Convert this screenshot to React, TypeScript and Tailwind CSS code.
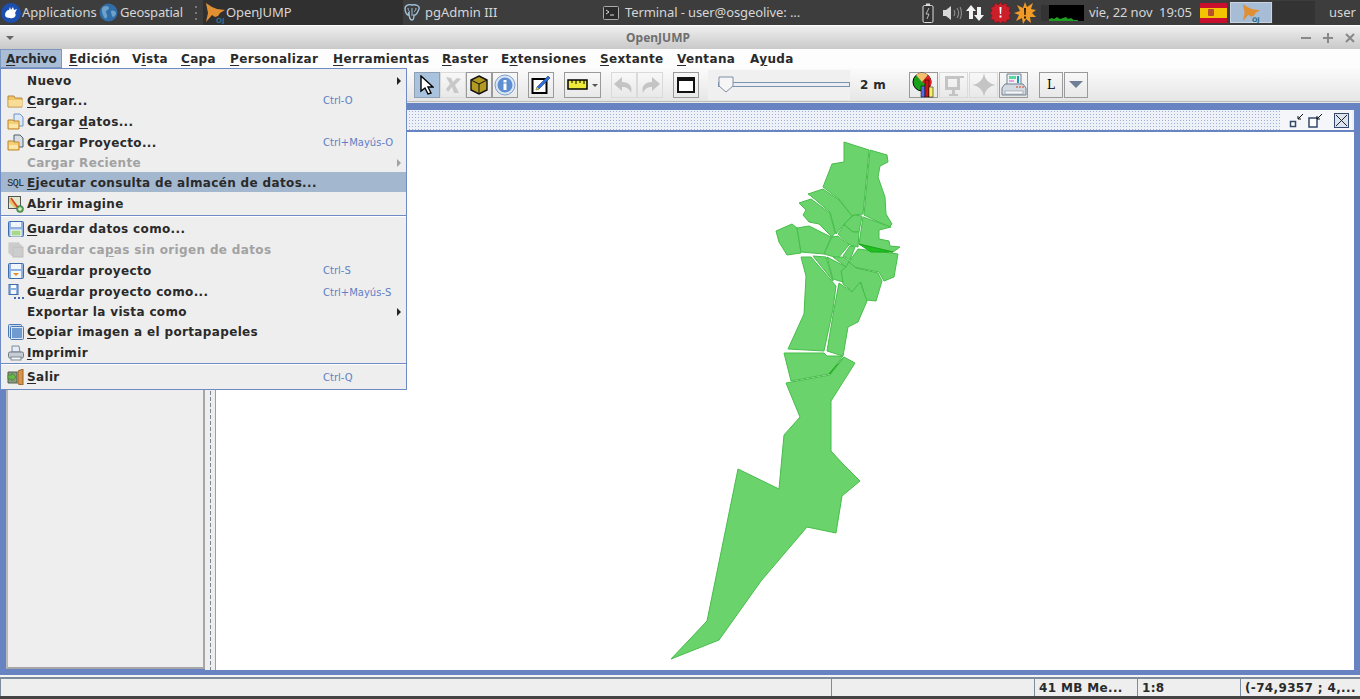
import type { ReactNode } from 'react';

const sans = 'font-["DejaVu_Sans",sans-serif]';

function Folder() {
  return (
    <svg width="17" height="16" viewBox="0 0 17 16">
      <path d="M1 3h6l1 2h7v9H1z" fill="#f0c668" stroke="#b88a3a" />
      <path d="M1.5 7h14v6.5h-14z" fill="#f8dc98" />
    </svg>
  );
}

function FolderDoc({ sq }: { sq?: boolean }) {
  return (
    <svg width="17" height="18" viewBox="0 0 17 18">
      <path d="M7 1h6l3 3v9H7z" fill={sq ? '#d8dde4' : '#dce8f8'} stroke={sq ? '#50606c' : '#6f94c8'} />
      <path d="M1 7h5l1 1h5v8H1z" fill="#f4cf76" stroke="#c0862c" />
      <path d="M2 11h9v4H2z" fill="#fbe6a8" />
    </svg>
  );
}

function Disk({ kind }: { kind: 'data' | 'proj' | 'faded' }) {
  if (kind === 'faded') {
    return (
      <svg width="16" height="16" viewBox="0 0 16 16">
        <rect x="1" y="1" width="10" height="10" fill="#d4d4d4" stroke="#c4c4c4" />
        <rect x="3" y="3" width="10" height="10" fill="#d4d4d4" stroke="#c4c4c4" />
        <rect x="5" y="5" width="10" height="10" fill="#cdcdcd" stroke="#bdbdbd" />
      </svg>
    );
  }
  return (
    <svg width="16" height="16" viewBox="0 0 16 16">
      <rect x="0.5" y="0.5" width="15" height="15" rx="1" fill="#8fb2e0" stroke="#3f6cad" />
      <rect x="3" y="1" width="10" height="5" fill="#f2f6fb" />
      {kind === 'data' ? (
        <rect x="3" y="9" width="10" height="6" fill="#a8d88a" stroke="#fff" />
      ) : (
        <>
          <rect x="3" y="8" width="10" height="7" fill="#f4f6f9" />
          <path d="M5 10l3 3 3-3z" fill="#e0912c" />
        </>
      )}
    </svg>
  );
}

function DiskSmall() {
  return (
    <svg width="16" height="16" viewBox="0 0 16 16">
      <rect x="1" y="0.5" width="9" height="10" fill="#8fb2e0" stroke="#3f6cad" />
      <rect x="3" y="1" width="5" height="3" fill="#fff" />
      <rect x="3" y="6" width="5" height="4" fill="#f4f6f9" />
      <path d="M6 13h2v2H6zM10 13h2v2h-2zM14 13h2v2h-2z" fill="#3f6cad" />
    </svg>
  );
}

function MapIcon() {
  return (
    <svg width="16" height="17" viewBox="0 0 16 17">
      <rect x="0.5" y="0.5" width="12" height="12" fill="#dfe8c8" stroke="#555" />
      <path d="M1 1l6 5 5 6H7L1 6z" fill="#e8c060" />
      <path d="M3 2l7 10" stroke="#d04030" strokeWidth="1.5" />
      <circle cx="12" cy="13" r="3.5" fill="#58a848" stroke="#356" strokeWidth="0.5" />
      <path d="M10 13h4M12 11v4" stroke="#fff" />
    </svg>
  );
}

function CopyImage() {
  return (
    <svg width="16" height="16" viewBox="0 0 16 16">
      <rect x="0.5" y="0.5" width="13" height="13" rx="1" fill="#cfdcee" stroke="#4a78b4" />
      <rect x="2.5" y="2.5" width="13" height="13" rx="1" fill="#dce6f2" stroke="#4a78b4" />
      <rect x="4" y="4" width="10" height="10" fill="#6f9bd0" />
    </svg>
  );
}

function Printer() {
  return (
    <svg width="16" height="16" viewBox="0 0 16 16">
      <path d="M4 1h7l1 6H4z" fill="#e6edf6" stroke="#7d8a98" />
      <rect x="0.5" y="7" width="15" height="6" rx="1.5" fill="#c6ccd4" stroke="#6d7884" />
      <rect x="3" y="12" width="10" height="3" fill="#f4f4f4" stroke="#7d8a98" />
    </svg>
  );
}

function Door() {
  return (
    <svg width="17" height="16" viewBox="0 0 17 16">
      <path d="M1 3h9v11H1z" fill="#8a9a80" stroke="#52604c" />
      <path d="M11 2l5-2v16l-5-1z" fill="#d8934c" stroke="#9a6228" />
      <path d="M1 6h4V4l4 4-4 4v-2H1z" fill="#68b848" stroke="#3c7a2c" strokeWidth="0.6" />
    </svg>
  );
}

type Row = {
  pre: string;
  u?: string;
  post?: string;
  h: string;
  icon?: ReactNode;
  key?: string;
  sub?: boolean;
  off?: boolean;
  hot?: boolean;
  sep?: boolean;
};

const rows: Row[] = [
  { pre: 'Nuevo', h: 'h-[20px] pt-[2px]', sub: true },
  { pre: '', u: 'C', post: 'argar...', h: 'h-[21px]', icon: <Folder />, key: 'Ctrl-O' },
  { pre: 'Cargar ', u: 'd', post: 'atos...', h: 'h-[21px]', icon: <FolderDoc /> },
  { pre: 'Ca', u: 'r', post: 'gar Proyecto...', h: 'h-[21px]', icon: <FolderDoc sq />, key: 'Ctrl+Mayús-O' },
  { pre: 'Cargar Reciente', h: 'h-[19px]', sub: true, off: true },
  {
    pre: '',
    u: 'E',
    post: 'jecutar consulta de almacén de datos...',
    h: 'h-[20px] pt-[2px]',
    hot: true,
    icon: <span className='font-["Liberation_Mono",monospace] text-[10px] font-normal tracking-[-0.5px] text-[#222]'>SQL</span>,
  },
  { pre: 'A', u: 'b', post: 'rir imagine', h: 'h-[22px] pt-[2px]', icon: <MapIcon />, sep: true },
  { pre: '', u: 'G', post: 'uardar datos como...', h: 'h-[21px]', icon: <Disk kind="data" /> },
  { pre: 'Guardar ca', u: 'p', post: 'as sin origen de datos', h: 'h-[21px]', off: true, icon: <Disk kind="faded" /> },
  { pre: 'G', u: 'u', post: 'ardar proyecto', h: 'h-[21px]', icon: <Disk kind="proj" />, key: 'Ctrl-S' },
  { pre: 'Gu', u: 'a', post: 'rdar proyecto como...', h: 'h-[20px] pt-[2px]', icon: <DiskSmall />, key: 'Ctrl+Mayús-S' },
  { pre: 'Exportar la vista como', h: 'h-[20px] pt-[2px]', sub: true },
  { pre: '', u: 'C', post: 'opiar imagen a el portapapeles', h: 'h-[21px]', icon: <CopyImage /> },
  { pre: '', u: 'I', post: 'mprimir', h: 'h-[20px] pt-[2px]', icon: <Printer />, sep: true },
  { pre: '', u: 'S', post: 'alir', h: 'h-[22px]', icon: <Door />, key: 'Ctrl-Q' },
];

function FileMenu() {
  return (
    <div className={`absolute left-0 top-[68px] z-10 w-[407px] border border-[#6e8bc6] bg-[#eeeeee] pb-[1px] pt-[1px] text-[12px] font-bold tracking-[0.35px] text-[#2a2a2a] ${sans}`}>
      {rows.map((r, i) => (
        <div key={i}>
          <div className={`flex items-center ${r.h} ${r.hot ? 'bg-[#a3b8cf]' : ''} ${r.off ? 'text-[#a2a2a2]' : ''}`}>
            <span className="flex w-[26px] shrink-0 justify-center pl-[3px]">{r.icon}</span>
            <span className="whitespace-pre">
              {r.pre}
              {r.u && <span className="underline underline-offset-2">{r.u}</span>}
              {r.post}
            </span>
            {r.key && (
              <span className="absolute left-[322px] text-[10px] font-normal tracking-normal text-[#5f80c4]">{r.key}</span>
            )}
            {r.sub && (
              <span className={`absolute left-[396px] h-0 w-0 border-y-[4px] border-l-[4px] border-y-transparent ${r.off ? 'border-l-[#a2a2a2]' : 'border-l-[#222]'}`} />
            )}
          </div>
          {r.sep && <div className="my-[1px] h-[2px] border-t border-[#6e8bc6] bg-white" />}
        </div>
      ))}
    </div>
  );
}

function OjLogo({ size = 22 }: { size?: number }) {
  return (
    <svg width={size} height={size} viewBox="0 0 22 22">
      <path d="M2 1l6 4 5 2 8 1-5 3-2 3-3 1-3-2-6 7 2-9z" fill="#e08f32" />
      <text x="12" y="21" fontSize="7" fontWeight="700" fill="#2e6f8c" fontFamily="DejaVu Sans">OJ</text>
    </svg>
  );
}

function TopPanel() {
  return (
    <div className='flex h-[25px] shrink-0 items-center bg-[#3d3d3d] text-[13px] text-[#d6d6d6] font-["Noto_Sans",sans-serif]'>
      <span className="ml-[1px] flex h-[20px] w-[20px] items-center justify-center rounded-full bg-[#1d4fb0]">
        <svg width="15" height="13" viewBox="0 0 15 13">
          <path d="M1 9c0-3 2-5 4-5l1-3 1 3 2-3 1 3 3-1-2 4c2 3-1 6-5 5-3 0-5-1-5-3z" fill="#fff" />
        </svg>
      </span>
      <span className="ml-[1px] w-[77px]">Applications</span>
      <svg width="19" height="19" viewBox="0 0 19 19">
        <circle cx="9.5" cy="9.5" r="9" fill="#2f6ea8" />
        <path d="M4 4c3-2 6-1 6 1s-3 2-3 4 2 2 1 5-3 1-4-2-2-6 0-8zM12 8c2-1 5 0 5 2s-2 4-3 4-2-4-2-6z" fill="#6fa0c8" />
      </svg>
      <span className="ml-[2px] w-[69px] tracking-[-0.2px]">Geospatial</span>
      <div className="h-[20px] w-[14px] bg-[radial-gradient(#777_1px,transparent_1px)] bg-[length:4px_6px] bg-center bg-repeat-y" />
      <div className="flex h-[25px] w-[200px] items-center bg-[#303030] pl-[1px]">
        <OjLogo />
        <span className="tracking-[-0.1px]">OpenJUMP</span>
      </div>
      <div className="flex h-[25px] w-[200px] items-center">
        <svg width="18" height="18" viewBox="0 0 18 18">
          <path d="M9 1c-3-1-7 0-7 4 0 3 2 6 3 6l1-3c0 4 1 8 3 8s2-3 2-5c3 1 4-4 5-6 1-3-3-5-7-4z" fill="none" stroke="#9fc0d8" strokeWidth="1.4" />
          <path d="M9 4v8M5 4c0 2 1 3 2 4M13 4c0 2-1 3-2 4" stroke="#9fc0d8" fill="none" />
        </svg>
        <span className="ml-[4px]">pgAdmin III</span>
      </div>
      <div className="flex h-[25px] w-[317px] items-center">
        <svg width="16" height="14" viewBox="0 0 16 14">
          <rect x="0.5" y="0.5" width="15" height="13" rx="1" fill="#2b2b2b" stroke="#aaa" />
          <path d="M3 4l3 2-3 2M7 9h4" stroke="#ddd" fill="none" />
        </svg>
        <span className="ml-[6px] tracking-[-0.1px]">Terminal - user@osgeolive: ...</span>
      </div>
      <svg width="12" height="20" viewBox="0 0 12 20" className="ml-[2px]">
        <rect x="4" y="0.5" width="4" height="2" fill="#ddd" />
        <rect x="1" y="2.5" width="10" height="17" rx="1.5" fill="#333" stroke="#ddd" />
        <path d="M7 5L4 11h3l-2 5" stroke="#bbb" fill="none" />
      </svg>
      <svg width="20" height="16" viewBox="0 0 20 16" className="ml-[8px]">
        <path d="M1 5h3l5-4v14l-5-4H1z" fill="#d8d8d8" />
        <path d="M12 5c1 2 1 4 0 6M15 3c2 3 2 7 0 10M18 2c2 4 2 8 0 12" stroke="#8a8a8a" fill="none" strokeWidth="1.2" />
      </svg>
      <svg width="19" height="18" viewBox="0 0 19 18" className="ml-[4px]">
        <path d="M5 1l5 6H7v8H3V7H0z" fill="#f2f2f2" />
        <path d="M13 17l-5-6h3V3h4v8h3z" fill="#f2f2f2" />
      </svg>
      <svg width="21" height="21" viewBox="0 0 21 21" className="ml-[5px]">
        <path d="M10.5 0l2 3 3.500-2 1 3.500 3.500 1-1.500 3.500 2 2-2 2.500 1.500 3.500-3.500 1-1 3-3.500-1.500-2 2.500-2-2.500-3.500 1.500-1-3-3.500-1 1.500-3.500-2-2.500 2-2-1.500-3.500 3.500-1 1-3.500 3.500 2z" fill="#cc1f2a" stroke="#7d1018" strokeWidth="0.5" />
        <path d="M9.500 5h2l-.4 7h-1.200zM9.500 13.500h2v2h-2z" fill="#fff" />
      </svg>
      <svg width="22" height="22" viewBox="0 0 22 22" className="ml-[3px]">
        <path d="M11 0l2 5 6-4-2 6 5 1-4 3 4 4-6 0 1 6-5-4-3 5-1-6-6 3 3-6-5-2 6-2-3-6 6 3z" fill="#f09a28" />
        <path d="M10 6h2l-.3 7h-1.400zM10 14.500h2v2h-2z" fill="#2a1a05" />
      </svg>
      <div className="ml-[5px] flex h-[16px] w-[43px] items-end bg-black">
        <div className="h-full w-[8px] bg-[#333]" />
        <svg width="35" height="5" viewBox="0 0 35 5">
          <path d="M0 5V3l3-1 2 1 3-2 3 2 3-1 3-1 2 2 3-1 3 2 4 0v1z" fill="#1f9f1f" />
        </svg>
      </div>
      <span className="ml-[5px] w-[111px] whitespace-pre tracking-[-0.1px]">vie, 22 nov  19:05</span>
      <div className="flex h-[20px] w-[27px] flex-col">
        <div className="h-[5px] bg-[#c8102e]" />
        <div className="flex h-[10px] items-center bg-[#f5c400] pl-[8px]">
          <div className="h-[7px] w-[6px] rounded-[1px] bg-[#b8502a]" />
        </div>
        <div className="h-[5px] bg-[#c8102e]" />
      </div>
      <div className="ml-[3px] flex h-[21px] w-[42px] items-center justify-center border border-[#c9d4e0] bg-[#a7bdd6]">
        <OjLogo size={20} />
      </div>
      <div className="ml-[1px] h-[23px] w-[42px] bg-[#333333]" />
      <span className="ml-[14px]">user</span>
    </div>
  );
}

const menus: { a: string; u: string; b: string; w: string }[] = [
  { a: '', u: 'E', b: 'dición', w: 'w-[63px]' },
  { a: 'V', u: 'i', b: 'sta', w: 'w-[49px]' },
  { a: '', u: 'C', b: 'apa', w: 'w-[49px]' },
  { a: '', u: 'P', b: 'ersonalizar', w: 'w-[103px]' },
  { a: '', u: 'H', b: 'erramientas', w: 'w-[109px]' },
  { a: '', u: 'R', b: 'aster', w: 'w-[59px]' },
  { a: 'E', u: 'x', b: 'tensiones', w: 'w-[99px]' },
  { a: '', u: 'S', b: 'extante', w: 'w-[77px]' },
  { a: '', u: 'V', b: 'entana', w: 'w-[73px]' },
  { a: 'A', u: 'y', b: 'uda', w: 'w-[60px]' },
];

function MenuBar() {
  return (
    <div className={`flex h-[19px] shrink-0 items-center bg-[#fdfdfd] text-[12px] font-bold tracking-[0.35px] text-[#2a2a2a] ${sans}`}>
      <span className="mr-[7px] flex h-[19px] w-[62px] items-center border border-[#7d97bd] bg-[#a9bed6] pl-[5px] tracking-[-0.05px]">
        <span className="underline underline-offset-2">A</span>rchivo
      </span>
      {menus.map((m) => (
        <span key={m.u + m.b} className={`whitespace-nowrap ${m.w}`}>
          {m.a}
          <span className="underline underline-offset-2">{m.u}</span>
          {m.b}
        </span>
      ))}
    </div>
  );
}

function Btn({ children, w = 'w-[26px]', off, on }: { children?: ReactNode; w?: string; off?: boolean; on?: boolean }) {
  return (
    <div className={`flex h-[26px] items-center justify-center border ${w} ${on ? 'border-[#90a0b4] bg-[#a9c2de]' : off ? 'border-[#dadada]' : 'border-[#9a9a9a]'}`}>
      {children}
    </div>
  );
}

function Toolbar() {
  return (
    <div className="flex h-[34px] shrink-0 items-center border-b border-[#bdbdbd] bg-gradient-to-b from-[#fbfbfb] to-[#e6e6e6] pl-[414px]">
      <Btn on>
        <svg width="14" height="20" viewBox="0 0 14 20">
          <path d="M1 1v15l4-3 3 6 3-1-3-6h5z" fill="#fff" stroke="#000" strokeWidth="1.4" />
        </svg>
      </Btn>
      <Btn off>
        <svg width="20" height="20" viewBox="0 0 20 20">
          <path d="M3 2l5 1 2 4 4-4 4 1-6 6 4 8h-5l-2-6-4 5-2-3 4-5z" fill="#c8c8c8" />
        </svg>
      </Btn>
      <Btn>
        <svg width="20" height="20" viewBox="0 0 20 20">
          <path d="M10 1l8 4v10l-8 4-8-4V5z" fill="#b39a22" stroke="#111" strokeWidth="1.4" />
          <path d="M2 5l8 4 8-4M10 9v10" stroke="#111" fill="none" />
        </svg>
      </Btn>
      <Btn>
        <svg width="22" height="22" viewBox="0 0 22 22">
          <circle cx="11" cy="11" r="10" fill="#dbe6f4" stroke="#7f9fcc" />
          <circle cx="11" cy="11" r="7.500" fill="#5f8fd0" />
          <rect x="9.500" y="9.500" width="3" height="6.500" fill="#fff" />
          <rect x="9.500" y="6" width="3" height="2.500" fill="#fff" />
        </svg>
      </Btn>
      <div className="ml-[10px]">
        <Btn>
          <svg width="20" height="20" viewBox="0 0 20 20">
            <rect x="1.500" y="4" width="14" height="14" fill="#fff" stroke="#000" strokeWidth="2" />
            <path d="M17 1l2 2-11 11-3 1 1-3z" fill="#2d6fe0" stroke="#123" strokeWidth="0.5" />
            <path d="M5 15l1-3 2 2z" fill="#f0d020" />
          </svg>
        </Btn>
      </div>
      <div className="ml-[10px]">
        <Btn w="w-[37px]">
          <svg width="32" height="14" viewBox="0 0 32 14">
            <rect x="1" y="2" width="19" height="9" fill="#efe93a" stroke="#000" strokeWidth="1.500" />
            <path d="M5 2v3M9 2v4M13 2v3M17 2v4" stroke="#000" />
            <path d="M25 6h6l-3 3z" fill="#555" />
          </svg>
        </Btn>
      </div>
      <div className="ml-[10px]">
        <Btn off>
          <svg width="22" height="20" viewBox="0 0 22 20">
            <path d="M9 2L1 9l8 7v-4c4 0 7 1 9 6 2-7-2-11-9-11z" fill="#c4c4c4" />
          </svg>
        </Btn>
      </div>
      <Btn off>
        <svg width="22" height="20" viewBox="0 0 22 20">
          <path d="M13 2l8 7-8 7v-4c-4 0-7 1-9 6-2-7 2-11 9-11z" fill="#c4c4c4" />
        </svg>
      </Btn>
      <div className="ml-[10px]">
        <Btn>
          <div className="h-[16px] w-[18px] border-2 border-t-[4px] border-[#111] bg-white" />
        </Btn>
      </div>
      <div className="ml-[9px] flex h-[30px] w-[142px] items-center bg-[#f0f0f0] pl-[10px]">
        <div className="relative h-[5px] w-[134px] border border-[#7f93ac] bg-[#e8eef4]">
          <svg width="16" height="17" viewBox="0 0 16 17" className="absolute -left-[1px] -top-[7px]">
            <path d="M1 1h14v9l-7 6-7-6z" fill="#f6f6f6" stroke="#7f8fa4" />
          </svg>
        </div>
      </div>
      <span className={`ml-[10px] w-[49px] text-[12px] font-bold tracking-[0.35px] text-[#2a2a2a] ${sans}`}>2 m</span>
      <Btn w="w-[29px]">
        <svg width="26" height="26" viewBox="0 0 26 26">
          <circle cx="11" cy="10" r="9" fill="#18a018" stroke="#000" />
          <path d="M11 10L5 3a9 9 0 0 1 12 0z" fill="#f4c070" />
          <path d="M11 10l6-7a9 9 0 0 1 2 12z" fill="#e02020" />
          <rect x="10" y="14" width="4" height="11" fill="#5a6ae0" stroke="#000" strokeWidth="0.5" />
          <rect x="14" y="8" width="4" height="17" fill="#c81818" stroke="#000" strokeWidth="0.5" />
          <rect x="18" y="15" width="4" height="10" fill="#f4f060" stroke="#000" strokeWidth="0.5" />
        </svg>
      </Btn>
      <div className="ml-[1px]">
        <Btn w="w-[29px]" off>
          <svg width="22" height="24" viewBox="0 0 22 24">
            <path d="M2 3h15v14H2zM5 6v8h9V6zM9 17h3v4h3v2H6v-2h3zM17 3h4v2h-4z" fill="#c4c4c4" />
          </svg>
        </Btn>
      </div>
      <div className="ml-[1px]">
        <Btn w="w-[29px]" off>
          <svg width="26" height="26" viewBox="0 0 26 26">
            <path d="M13 1c1 7 5 11 12 12-7 1-11 5-12 12-1-7-5-11-12-12 7-1 11-5 12-12z" fill="#c4c4c4" />
          </svg>
        </Btn>
      </div>
      <div className="ml-[1px]">
        <Btn w="w-[29px]">
          <svg width="26" height="26" viewBox="0 0 26 26">
            <path d="M6 2h14v11H6z" fill="#eef2f6" stroke="#708090" />
            <rect x="8" y="4" width="7" height="3" fill="#58d8a0" />
            <rect x="8" y="8" width="5" height="2" fill="#e8a0d8" />
            <rect x="16" y="4" width="2" height="7" fill="#2098b0" />
            <path d="M1 16l3-4h18l3 4v7H1z" fill="#d4dae2" stroke="#708090" />
            <path d="M15 15h2M18 15h2M21 15h2" stroke="#d04020" />
            <rect x="4" y="19" width="18" height="3" fill="#f8f8f8" stroke="#708090" strokeWidth="0.5" />
          </svg>
        </Btn>
      </div>
      <div className="ml-[11px]">
        <Btn w="w-[24px]">
          <span className='text-[12px] text-black font-["DejaVu_Serif",serif]'>L</span>
        </Btn>
      </div>
      <div className="ml-[1px]">
        <Btn w="w-[24px]">
          <span className="h-0 w-0 border-x-[7px] border-t-[7px] border-x-transparent border-t-[#6f7f94]" />
        </Btn>
      </div>
    </div>
  );
}

const blocks: { d: string; dark?: boolean }[] = [
  { d: '843,143 868,151 862,215 853,216 851,217 838,200 822,188 831,165 843,163' },
  { d: '869,151 886,156 887,163 879,167 877,178 884,198 885,215 891,225 888,228 863,216' },
  { d: '807,195 822,190 838,201 851,217 843,225 835,235 829,213 810,197' },
  { d: '798,204 810,200 829,214 834,234 831,238 818,225 808,223 802,216 805,211' },
  { d: '775,232 791,225 796,229 800,254 786,256 778,243' },
  { d: '796,229 808,227 830,238 823,255 800,253' },
  { d: '837,237 848,246 837,259 823,255 831,238' },
  { d: '843,225 853,216 861,217 858,233 852,233' },
  { d: '837,235 843,226 852,233 858,233 857,248 849,246' },
  { d: '849,247 854,248 849,261 842,257' },
  { d: '862,218 890,228 878,231 878,240 888,242 889,247 899,248 892,253 858,245' },
  { d: '857,250 897,255 893,278 883,282 878,273 853,268 848,263' },
  { d: '858,245 892,253 870,253', dark: true },
  { d: '840,272 848,263 855,269 877,274 881,282 875,302 865,301 860,283 852,293 842,285' },
  { d: '812,257 825,258 832,282' },
  { d: '826,258 845,268 840,272 842,283 832,280' },
  { d: '832,258 842,258 848,262 845,268' },
  { d: '800,258 810,258 835,287 832,310 823,352 787,350 803,315 805,277' },
  { d: '838,284 851,293 859,283 866,302 857,323 847,328 842,357 826,352 833,310' },
  { d: '783,354 823,354 826,357 842,357 828,375 790,382' },
  { d: '843,358 828,375 838,371', dark: true },
  { d: '670,660 706,622 737,470 778,490 783,436 799,418 785,384 829,376 843,358 854,364 830,402 830,452 842,465 859,482 841,497 835,534 806,528 760,582 718,641' },
];

function Desktop() {
  return (
    <div className="flex min-h-0 flex-1 flex-col bg-[#6783c1] pb-[5px] pl-[6px] pr-[6px] pt-[7px]">
      <div className="flex h-[20px] shrink-0 items-center justify-end bg-[#eef2f8] bg-[radial-gradient(#9db0d6_1px,transparent_1px)] bg-[length:3px_3px] pr-[2px]">
        <div className="flex h-full w-[72px] items-center justify-end bg-[#f4f6fa] pr-[3px]">
          <svg width="15" height="15" viewBox="0 0 15 15" className="mr-[4px]">
            <rect x="1.500" y="8.500" width="5" height="5" fill="#fff" stroke="#334a6c" strokeWidth="1.500" />
            <path d="M14 1l-5 5M9 3v3h3" stroke="#111" fill="none" />
          </svg>
          <svg width="15" height="15" viewBox="0 0 15 15" className="mr-[11px]">
            <rect x="1" y="5" width="8" height="9" fill="#fff" stroke="#334a6c" strokeWidth="1.500" />
            <path d="M14 1l-5 5M9 3v3h3" stroke="#111" fill="none" />
          </svg>
          <svg width="15" height="15" viewBox="0 0 15 15">
            <rect x="0.500" y="0.500" width="14" height="14" fill="#dce4f0" stroke="#334a6c" />
            <path d="M2 2l11 11M13 2L2 13" stroke="#222" />
          </svg>
        </div>
      </div>
      <div className="h-[2px] shrink-0 bg-[#6783c1]" />
      <div className="flex min-h-0 flex-1">
        <div className="mb-[1px] w-[199px] shrink-0 border-2 border-t-0 border-[#a6a6a6] border-l-[#b8b8b8] bg-[#eeeeee]" />
        <div className="flex w-[11px] shrink-0 justify-center border-r border-[#8f9fb6] bg-[#eeeeee]">
          <div className="w-[3px] bg-[radial-gradient(#7a8796_1px,transparent_1px)] bg-[length:3px_6px]" />
        </div>
        <svg viewBox="216 133 1136 538" className="min-w-0 flex-1 bg-white">
          {blocks.map((b, i) => (
            <polygon key={i} points={b.d} fill={b.dark ? '#20c020' : '#6bd36c'} stroke={b.dark ? '#18a818' : '#46bd4a'} strokeWidth="1" />
          ))}
        </svg>
      </div>
    </div>
  );
}

function StatusBar() {
  const cell = 'flex h-full items-center whitespace-nowrap border-l border-[#7d8c9c] pl-[4px]';
  return (
    <div className={`flex h-[19px] shrink-0 border-t-2 border-[#7d8c9c] bg-[#eeeeee] text-[12px] font-bold tracking-[0.35px] text-[#2a2a2a] ${sans}`}>
      <div className="h-full w-[831px] border-l border-[#7d8c9c]" />
      <div className="h-full w-[203px] border-l border-[#7d8c9c]" />
      <div className={`${cell} w-[103px]`}>41 MB Me...</div>
      <div className={`${cell} w-[103px]`}>1:8</div>
      <div className={`${cell} flex-1`}>(-74,9357 ; 4,...</div>
    </div>
  );
}

export default function App() {
  return (
    <div className="relative flex h-[699px] w-[1360px] flex-col overflow-hidden bg-[#3d3d3d]">
      <TopPanel />
      <div className="h-[1px] shrink-0 bg-white" />
      <div className='relative flex h-[23px] shrink-0 items-center justify-center bg-gradient-to-b from-[#efefef] to-[#c9c9c9] pr-[44px] text-[12px] font-bold text-[#6e6e6e] font-["Noto_Sans",sans-serif]'>
        <span className="absolute left-[6px] top-[10px] h-0 w-0 border-x-[4px] border-t-[4px] border-x-transparent border-t-[#666]" />
        OpenJUMP
        <div className="absolute right-[3px] top-[5px] flex gap-[8px] text-[#888]">
          <svg width="14" height="14" viewBox="0 0 14 14"><path d="M2 7h10" stroke="#888" strokeWidth="2" /></svg>
          <svg width="14" height="14" viewBox="0 0 14 14"><path d="M2 7h10M7 2v10" stroke="#888" strokeWidth="2" /></svg>
          <svg width="14" height="14" viewBox="0 0 14 14"><path d="M3 3l8 8M11 3l-8 8" stroke="#888" strokeWidth="2" /></svg>
        </div>
      </div>
      <MenuBar />
      <Toolbar />
      <div className="h-[1px] shrink-0 bg-[#e8e8e8]" />
      <Desktop />
      <div className="h-[2px] shrink-0 bg-[#f4f4f4]" />
      <StatusBar />
      <div className="h-[3px] shrink-0 bg-[#444]" />
      <FileMenu />
    </div>
  );
}
